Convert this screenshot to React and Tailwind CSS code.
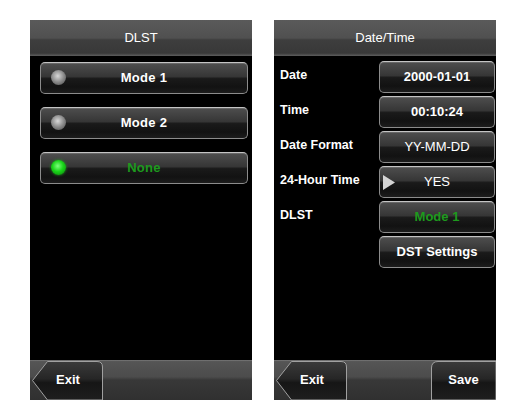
import React from 'react';

const font = { fontFamily: '"Liberation Sans", Arial, sans-serif' };

const btn =
  'rounded-[5px] border border-[#8c8c8c] border-t-[#c4c4c4] bg-[linear-gradient(to_bottom,#4e4e4e_0%,#363636_45%,#1a1a1a_52%,#121212_80%,#1c1c1c_100%)] shadow-[inset_0_1px_0_rgba(255,255,255,0.15)] flex items-center justify-center';

const Header = ({ title }) => (
  <div className="h-[36px] shrink-0 flex items-center justify-center text-white text-[13px] bg-[linear-gradient(to_bottom,#5a5a5a_0%,#505050_50%,#3e3e3e_55%,#383838_92%,#5e5e5e_100%)]">
    {title}
  </div>
);

const Radio = ({ on }) => (
  <span
    className={
      'block w-[15px] h-[15px] rounded-full ' +
      (on
        ? 'bg-[radial-gradient(circle_at_45%_40%,#7dff7d_0%,#19d419_45%,#0a7a0a_100%)] shadow-[0_0_3px_#1f9f1f]'
        : 'bg-[radial-gradient(circle_at_45%_40%,#d8d8d8_0%,#8a8a8a_50%,#444_100%)]')
    }
  />
);

const ModeButton = ({ label, on }) => (
  <div className={btn + ' h-[32px] relative'}>
    <div className="absolute left-[10px] top-[7px]">
      <Radio on={on} />
    </div>
    <span className={'text-[13px] font-bold tracking-[0.3px] ' + (on ? 'text-[#1d9a1d]' : 'text-white')}>{label}</span>
  </div>
);

// chevron-shaped back key on the left of the footer
const ExitKey = () => (
  <div className="relative w-[73px] h-[40px] ml-[1px] flex items-center justify-center">
    <svg className="absolute inset-0" width="73" height="40" viewBox="0 0 73 40">
      <defs>
        <linearGradient id="keyfill" x1="0" y1="0" x2="0" y2="1">
          <stop offset="0" stopColor="#3a3a3a" />
          <stop offset="0.45" stopColor="#262626" />
          <stop offset="0.55" stopColor="#161616" />
          <stop offset="1" stopColor="#1e1e1e" />
        </linearGradient>
      </defs>
      <path d="M16.5 1.5 L66 1.5 Q71.5 1.5 71.5 7 L71.5 40 L16.5 40 L1.5 20.5 Z" fill="url(#keyfill)" stroke="#a0a0a0" strokeWidth="1" />
    </svg>
    <span className="relative text-white text-[13px] font-bold pl-[1px]">Exit</span>
  </div>
);

const SaveKey = () => (
  <div className="relative w-[65px] h-[40px] flex items-center justify-center">
    <svg className="absolute inset-0" width="65" height="40" viewBox="0 0 65 40">
      <defs>
        <linearGradient id="savefill" x1="0" y1="0" x2="0" y2="1">
          <stop offset="0" stopColor="#3a3a3a" />
          <stop offset="0.45" stopColor="#262626" />
          <stop offset="0.55" stopColor="#161616" />
          <stop offset="1" stopColor="#1e1e1e" />
        </linearGradient>
      </defs>
      <path d="M7 1.5 L65 1.5 L65 40 L0.5 40 L0.5 8 Q0.5 1.5 7 1.5 Z" fill="url(#savefill)" stroke="#a0a0a0" strokeWidth="1" />
    </svg>
    <span className="relative text-white text-[13px] font-bold">Save</span>
  </div>
);

const Footer = ({ children }) => (
  <div className="h-[40px] shrink-0 flex justify-between bg-[linear-gradient(to_bottom,#7a7a7a_0%,#555_4%,#4c4c4c_42%,#383838_50%,#303030_100%)]">
    {children}
  </div>
);

const Row = ({ label, children, green, arrow }) => (
  <div className="h-[32px] flex items-center">
    <span className="w-[105px] pl-[6px] text-white text-[12.5px] font-bold -mt-[3px]">{label}</span>
    {children !== undefined && (
      <div className={btn + ' w-[116px] h-[32px] relative'}>
        {arrow && (
          <svg className="absolute left-[3px] top-[8px]" width="12" height="15" viewBox="0 0 12 15">
            <path d="M0 0 L12 7.5 L0 15 Z" fill="#d4d4d4" />
          </svg>
        )}
        <span className={'text-[13px] font-bold ' + (green ? 'text-[#1d9a1d]' : 'text-white')}>{children}</span>
      </div>
    )}
  </div>
);

export default function App() {
  return (
    <div style={font} className="w-[519px] h-[418px] bg-white flex gap-[22px] pt-[20px] pl-[30px]">
      <div className="w-[222px] h-[380px] flex flex-col">
        <Header title="DLST" />
        <div className="flex-1 bg-black flex flex-col gap-[13px] pt-[6px] pl-[10px] pr-[4px]">
          <ModeButton label="Mode 1" />
          <ModeButton label="Mode 2" />
          <ModeButton label="None" on />
        </div>
        <Footer>
          <ExitKey />
        </Footer>
      </div>

      <div className="w-[222px] h-[380px] flex flex-col">
        <Header title="Date/Time" />
        <div className="flex-1 bg-black flex flex-col gap-[3px] pt-[5px]">
          <Row label="Date">2000-01-01</Row>
          <Row label="Time">00:10:24</Row>
          <Row label="Date Format">
            <span className="font-normal">YY-MM-DD</span>
          </Row>
          <Row label="24-Hour Time" arrow>
            <span className="font-normal">YES</span>
          </Row>
          <Row label="DLST" green>Mode 1</Row>
          <Row label="">DST Settings</Row>
        </div>
        <Footer>
          <ExitKey />
          <SaveKey />
        </Footer>
      </div>
    </div>
  );
}
